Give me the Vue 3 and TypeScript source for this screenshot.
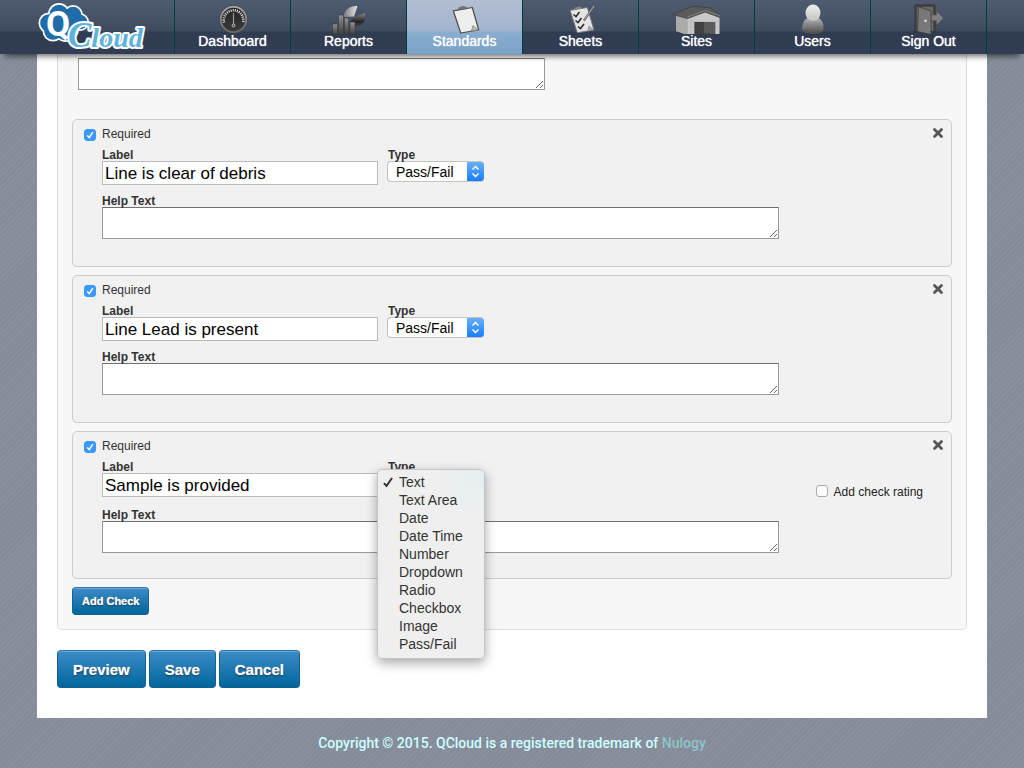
<script setup lang="ts">
import { ref } from 'vue'

interface Check {
  id: number
  required: boolean
  label: string
  type: string
  help: string
  rating?: boolean
  open?: boolean
}

const navItems = ['Dashboard', 'Reports', 'Standards', 'Sheets', 'Sites', 'Users', 'Sign Out']
const current = 'Standards'

const types = [
  'Text', 'Text Area', 'Date', 'Date Time', 'Number',
  'Dropdown', 'Radio', 'Checkbox', 'Image', 'Pass/Fail',
]

const sectionHelp = ref('')

const checks = ref<Check[]>([
  { id: 1, required: true, label: 'Line is clear of debris', type: 'Pass/Fail', help: '' },
  { id: 2, required: true, label: 'Line Lead is present', type: 'Pass/Fail', help: '' },
  { id: 3, required: true, label: 'Sample is provided', type: 'Text', help: '', rating: false, open: true },
])

function choose(check: Check, type: string) {
  check.type = type
  check.open = false
}

function removeCheck(id: number) {
  checks.value = checks.value.filter((c) => c.id !== id)
}

function addCheck() {
  const id = Math.max(0, ...checks.value.map((c) => c.id)) + 1
  checks.value.push({ id, required: false, label: '', type: 'Text', help: '', rating: false })
}
</script>

<template>
  <div class="page">
    <header class="topbar">
      <div class="topbar-inner">
        <a href="#" class="logo" aria-label="QCloud">
          <svg width="112" height="54" viewBox="0 0 112 54">
            <g fill="#fff">
              <circle cx="22" cy="14" r="11" /><circle cx="36" cy="15" r="10" />
              <circle cx="12" cy="23" r="10.500" /><circle cx="16" cy="31" r="10.500" />
              <circle cx="43" cy="22" r="9" /><circle cx="29" cy="29" r="13" />
            </g>
            <g fill="#1f6ca8">
              <circle cx="22" cy="14" r="9.3" /><circle cx="36" cy="15" r="8.3" />
              <circle cx="12" cy="23" r="8.8" /><circle cx="16" cy="31" r="8.8" />
              <circle cx="43" cy="22" r="7.3" /><circle cx="29" cy="29" r="11.3" />
            </g>
            <text x="9" y="36" class="logo-q">Q</text>
            <text x="31" y="47" class="logo-cloud"><tspan class="cap">C</tspan>loud</text>
          </svg>
        </a>
        <nav class="nav">
          <a
            v-for="item in navItems"
            :key="item"
            href="#"
            class="nav-item"
            :class="{ active: item === current }"
          >
            <svg v-if="item === 'Dashboard'" width="57" height="34" viewBox="0 0 57 34">
              <defs>
                <linearGradient id="ring" x1="0" y1="0" x2="0" y2="1">
                  <stop offset="0" stop-color="#a4a4a4" /><stop offset="1" stop-color="#666" />
                </linearGradient>
                <linearGradient id="dial" x1="0" y1="0" x2="0" y2="1">
                  <stop offset="0" stop-color="#222" /><stop offset="1" stop-color="#3c3c3c" />
                </linearGradient>
              </defs>
              <circle cx="29.5" cy="19.5" r="14.2" fill="#333" />
              <circle cx="29.5" cy="19.5" r="12.8" fill="url(#dial)" stroke="url(#ring)" stroke-width="2" />
              <path d="M20 22.500a9.800 9.800 0 1 1 19 0" fill="none" stroke="#ddd" stroke-width="2.600" stroke-dasharray="1.100 1" />
              <path d="M29.500 13v11" stroke="#999" stroke-width="1.200" />
              <circle cx="29.500" cy="25.500" r="1.400" fill="none" stroke="#ccc" stroke-width="1" />
            </svg>
            <svg v-else-if="item === 'Reports'" width="57" height="34" viewBox="0 0 57 34">
              <defs>
                <linearGradient id="bar" x1="0" y1="0" x2="0" y2="1">
                  <stop offset="0" stop-color="#929292" /><stop offset="1" stop-color="#3a3a3a" />
                </linearGradient>
                <linearGradient id="slice" x1="0" y1="0" x2="1" y2="0">
                  <stop offset="0" stop-color="#777" /><stop offset="1" stop-color="#e8e8e8" />
                </linearGradient>
                <linearGradient id="slice2" x1="0" y1="0" x2="0" y2="1">
                  <stop offset="0" stop-color="#888" /><stop offset="0.600" stop-color="#222" /><stop offset="1" stop-color="#555" />
                </linearGradient>
              </defs>
              <path d="M34 16.500 23.500 17C24 10 30 5.500 37.500 6z" fill="url(#slice)" />
              <path d="M33.500 17.500 45 13c1 8-3 14-10 14.500l-5-5z" fill="url(#slice2)" />
              <g fill="url(#bar)" stroke="#333" stroke-width="0.500">
                <rect x="12.500" y="24" width="5" height="11" />
                <rect x="18.400" y="15" width="5" height="20" />
                <rect x="24.300" y="18" width="4.500" height="17" />
                <rect x="30" y="22" width="5" height="13" />
              </g>
            </svg>
            <svg v-else-if="item === 'Standards'" width="57" height="34" viewBox="0 0 57 34">
              <path d="M17.300 10.800 36.300 7.500l6.400 22.500-18 3z" fill="#eee" stroke="#4a4a4a" stroke-width="1.200" stroke-linejoin="round" />
              <path d="m22 9.800 1-2.300 2.500-.4.500-.9 1.500.4 2.500.3 1 1.700z" fill="#777" stroke="#555" stroke-width=".5" />
              <path d="m35.500 31 1.500-5.500 5 4.500z" fill="#bbb" stroke="#777" stroke-width=".7" />
            </svg>
            <svg v-else-if="item === 'Sheets'" width="57" height="34" viewBox="0 0 57 34">
              <path d="M18 10.300 35.300 7.500l6.700 22.500-16.700 2.700z" fill="#e4e4e4" stroke="#777" stroke-width="1" stroke-linejoin="round" />
              <path d="m22 9.500 1-2 5-1 2 1.500z" fill="#888" />
              <path d="m36 31 1-5 4.500 4z" fill="#aaa" stroke="#777" stroke-width=".6" />
              <g fill="none" stroke="#2d2d2d" stroke-width="1.600">
                <path d="m21.500 14.500 2.500 2 3.500-4.500" /><path d="m23.500 20.500 2.500 2 3.500-4.500" /><path d="m26 26.500 2.500 2 3.500-4.500" />
              </g>
              <path d="M42.300 5.500 32 20.500" stroke="#555" stroke-width="2.200" />
              <path d="M42 6 32.500 19.500" stroke="#bbb" stroke-width="1" />
            </svg>
            <svg v-else-if="item === 'Sites'" width="57" height="34" viewBox="0 0 57 34">
              <path d="m8 15 11.500 2V35L8 31.300z" fill="#aaa" />
              <path d="M19.300 17 37 9l14.500 6.500V34H19.300z" fill="#c9c9c9" />
              <path d="M8 20.500l11.500 1.500 32-1M8 25l11.500 2h32M14 16v17M23 17v17" fill="none" stroke="#b0b0b0" stroke-width=".6" />
              <path d="M26.300 22h21v12h-21z" fill="#424242" />
              <path d="M36 22h11v12l-11-1z" fill="#5b5b5b" />
              <path d="M4.700 14.500 24.300 6.200l17.400 1.600 11.600 8-1.600 1.700-14.500-5.500-17.700 6.500z" fill="#5a5a5a" stroke="#3f3f3f" stroke-width=".8" />
              <path d="m19.500 17 18-6.500 15 5.500" fill="none" stroke="#8b8b8b" stroke-width=".8" />
            </svg>
            <svg v-else-if="item === 'Users'" width="57" height="34" viewBox="0 0 57 34">
              <defs>
                <linearGradient id="head" x1="0" y1="0" x2="0" y2="1">
                  <stop offset="0" stop-color="#eee" /><stop offset="1" stop-color="#c4c4c4" />
                </linearGradient>
                <linearGradient id="torso" x1="0" y1="0" x2="0" y2="1">
                  <stop offset="0" stop-color="#b4b4b4" /><stop offset="1" stop-color="#484848" />
                </linearGradient>
              </defs>
              <path d="M18 30c0-6 2-11 6-12h10c4 1 6 6 5.500 12-2 3-6 4-10.500 4s-9-1-11-4z" fill="url(#torso)" />
              <ellipse cx="29" cy="12.800" rx="7.500" ry="8.300" fill="url(#head)" />
            </svg>
            <svg v-else width="57" height="34" viewBox="0 0 57 34">
              <path d="M15 5h20v27H15z" fill="#484848" stroke="#333" />
              <path d="M17 7h16v24H17z" fill="#696969" />
              <path d="M31 15h5.500v-4l7 7-7 7v-4.500H31z" fill="#808080" stroke="#555" stroke-width=".6" />
              <path d="M18.300 6.700 31 11v23.500l-13.500-3z" fill="#787878" stroke="#3d3d3d" stroke-width=".8" />
              <circle cx="25.500" cy="20.700" r="1.300" fill="#ddd" />
            </svg>
            <span>{{ item }}</span>
          </a>
        </nav>
      </div>
    </header>

    <main class="content">
      <section class="panel">
        <div class="section-help">
          <label for="section-help" class="field-label">Help Text</label>
          <textarea id="section-help" v-model="sectionHelp"></textarea>
        </div>

        <article v-for="check in checks" :key="check.id" class="check">
          <div class="check-head">
            <input :id="`required-${check.id}`" v-model="check.required" type="checkbox" />
            <label :for="`required-${check.id}`">Required</label>
            <button type="button" class="close" aria-label="Remove check" @click="removeCheck(check.id)">
              <svg width="12" height="12" viewBox="0 0 12 12">
                <path d="m2.500 2.500 7 7m0-7-7 7" stroke="#555" stroke-width="2.800" stroke-linecap="round" />
              </svg>
            </button>
          </div>

          <div class="check-body">
            <div class="field-row">
              <div class="field name-field">
                <label :for="`label-${check.id}`" class="field-label">Label</label>
                <input :id="`label-${check.id}`" v-model="check.label" type="text" />
              </div>
              <div class="field type-field">
                <label :for="`type-${check.id}`" class="field-label">Type</label>
                <select :id="`type-${check.id}`" v-model="check.type">
                  <option v-for="type in types" :key="type">{{ type }}</option>
                </select>
                <ul v-if="check.open" class="menu" role="listbox" aria-label="Type">
                  <li
                    v-for="type in types"
                    :key="type"
                    role="option"
                    :aria-selected="type === check.type"
                    @click="choose(check, type)"
                  >
                    <svg v-if="type === check.type" class="tick" width="12" height="12" viewBox="0 0 12 12">
                      <path d="M2 7.200 4.500 10 10 2" fill="none" stroke="#333" stroke-width="2" />
                    </svg>
                    <span>{{ type }}</span>
                  </li>
                </ul>
              </div>
              <div v-if="check.rating !== undefined" class="rating">
                <input :id="`rating-${check.id}`" v-model="check.rating" type="checkbox" />
                <label :for="`rating-${check.id}`">Add check rating</label>
              </div>
            </div>
            <div class="field help-field">
              <label :for="`help-${check.id}`" class="field-label">Help Text</label>
              <textarea :id="`help-${check.id}`" v-model="check.help"></textarea>
            </div>
          </div>
        </article>

        <button type="button" class="btn small" @click="addCheck">Add Check</button>
      </section>

      <div class="actions">
        <button type="button" class="btn">Preview</button>
        <button type="button" class="btn">Save</button>
        <button type="button" class="btn">Cancel</button>
      </div>
    </main>

    <footer class="footer">
      Copyright © 2015. QCloud is a registered trademark of <a href="#">Nulogy</a>
    </footer>
  </div>
</template>

<style>
body {
  background: repeating-linear-gradient(135deg, #898f9d 0 2px, #858b99 2px 4px);
}
</style>

<style scoped>
.page {
  font: 12px/14px "Liberation Sans", Arial, sans-serif;
  color: #333;
}

.page * {
  box-sizing: border-box;
}

.topbar {
  position: sticky;
  top: 0;
  z-index: 5;
  height: 54px;
  background: linear-gradient(#4e5b71 0, #3f4b5f 31px, #303c50 32px, #313d53 100%);
  box-shadow: 0 7px 6px -5px rgba(0, 0, 0, 0.6);
}

.topbar-inner {
  display: flex;
  justify-content: space-between;
  max-width: 950px;
  height: 100%;
  margin: 0 auto;
}

.logo svg {
  display: block;
}

.logo-q {
  font: bold 35px Roboto, sans-serif;
  fill: #fff;
}

.logo-cloud {
  font: italic bold 28px "Liberation Serif", serif;
  fill: #5db3dc;
  stroke: #fff;
  stroke-width: 4px;
  stroke-linejoin: round;
  paint-order: stroke;
}

.logo-cloud .cap {
  font-size: 35px;
}

.nav {
  display: flex;
  border-right: 1px solid #063b3b;
}

.nav-item {
  display: flex;
  flex-direction: column;
  align-items: center;
  width: 116px;
  border-left: 1px solid #063b3b;
  color: #fff;
  font-size: 14px;
  line-height: 14px;
  text-decoration: none;
  text-shadow: 0 0 1px #fff;
}

.nav-item.active {
  background: linear-gradient(#b3bfd1 0, #a1b3cf 31px, #8badcf 32px, #78a2c8 100%);
}

.content {
  max-width: 950px;
  margin: -20px auto 0;
  padding: 0 20px 30px;
  background: #fff;
}

.panel {
  display: flex;
  flex-direction: column;
  align-items: stretch;
  gap: 8px;
  padding: 6px 14px 14px;
  border: 1px solid #ddd;
  border-top: 0;
  border-radius: 0 0 5px 5px;
  background: #f7f7f7;
}

.section-help {
  width: 467px;
  max-width: 100%;
  margin: 0 0 21px 6px;
}

.field-label {
  display: block;
  margin-bottom: -1px;
  padding-top: 2px;
  line-height: 14px;
  font-weight: bold;
}

.section-help .field-label {
  margin-bottom: 4px;
  padding: 0;
}

textarea {
  display: block;
  width: 100%;
  height: 32px;
  margin: 0;
  border: 1px solid #999;
  border-top-color: #707070;
  border-radius: 0;
  background: #fff;
}

.check {
  min-height: 148px;
  padding: 6px 7px 6px 11px;
  border: 1px solid #ccc;
  border-radius: 5px;
  background: #f1f1f1;
}

.check-head {
  display: flex;
  align-items: flex-start;
  gap: 6px;
  height: 16px;
  line-height: 16px;
}

.check-head input {
  margin-top: 3px;
}

input[type="checkbox"] {
  appearance: none;
  width: 12px;
  height: 12px;
  margin-bottom: 0;
  margin-inline: 0;
  border: 1px solid #aaa;
  border-radius: 3px;
  background: #fff;
}

input[type="checkbox"]:checked {
  border-color: #3b99fc;
  background: #3b99fc url("data:image/svg+xml,%3Csvg xmlns='http://www.w3.org/2000/svg' viewBox='0 0 10 10'%3E%3Cpath d='M2.200 5.400 4.300 7.600 7.800 2.200' fill='none' stroke='%23fff' stroke-width='1.500'/%3E%3C/svg%3E") center / 10px 10px no-repeat;
}

.close {
  display: flex;
  margin: 1px 0 0 auto;
  padding: 0;
  border: 0;
  background: none;
}

.check-body {
  margin: 4px 21px 0 18px;
}

.field-row {
  display: flex;
  align-items: flex-start;
  gap: 9px;
}

.name-field {
  width: 276px;
}

input[type="text"] {
  display: block;
  width: 100%;
  height: 24px;
  margin: 0;
  padding: 1px 2px 0;
  border: 1px solid #bbb;
  background: #fff;
  color: #000;
  font: 17px "Liberation Sans", Arial, sans-serif;
}

.type-field {
  position: relative;
  width: 97px;
}

.type-field .field-label {
  padding-left: 1px;
}

select {
  display: block;
  appearance: none;
  width: 100%;
  height: 21px;
  margin: 0;
  padding: 0 20px 0 8px;
  border: 1px solid #c3c3c3;
  border-right: 0;
  border-radius: 4px;
  background:
    url("data:image/svg+xml,%3Csvg xmlns='http://www.w3.org/2000/svg' viewBox='0 0 17 21'%3E%3Cpath d='m5.500 8.500 3-3 3 3M5.500 12.500l3 3 3-3' fill='none' stroke='%23fff' stroke-width='1.500'/%3E%3C/svg%3E") right center / 17px 21px no-repeat border-box,
    linear-gradient(#6bb2fb, #147bff) right center / 17px 21px no-repeat border-box,
    #fff;
  color: #000;
  font: 14px "Liberation Sans", Arial, sans-serif;
}

.menu {
  position: absolute;
  top: 11px;
  left: -10px;
  z-index: 2;
  width: 108px;
  margin: 0;
  padding: 3px 0 5px;
  border: 1px solid #c4c4c4;
  border-radius: 5px;
  background: radial-gradient(circle at top right, #e2f0f0 0, #efefef 50px);
  box-shadow: 0 4px 12px rgba(0, 0, 0, 0.35);
  list-style: none;
  font-size: 14px;
  line-height: 18px;
}

.menu li {
  position: relative;
  padding-left: 21px;
}

.tick {
  position: absolute;
  top: 3px;
  left: 4px;
}

.rating {
  display: flex;
  gap: 6px;
  margin: 27px 0 0 auto;
  color: #222;
}

.rating input {
  margin-top: 0;
}

.help-field {
  width: 677px;
  max-width: 100%;
  margin-top: 7px;
}

.btn {
  height: 38px;
  padding: 0 15px;
  border: 1px solid #14608f;
  border-top-color: #2c76ab;
  border-radius: 4px;
  background: linear-gradient(#3c8bc8, #00679b);
  box-shadow: inset 0 1px 0 rgba(255, 255, 255, 0.25);
  color: #fff;
  font: bold 15px "Liberation Sans", Arial, sans-serif;
  text-shadow: 0 1px 2px rgba(0, 0, 0, 0.6), 0 0 1px #fff;
}

.btn.small {
  align-self: flex-start;
  height: 28px;
  padding: 0 9px;
  font-size: 11px;
}

.actions {
  display: flex;
  gap: 3px;
  margin-top: 20px;
}

.footer {
  padding: 15px 20px;
  color: #cff;
  font: 500 14px/20px Roboto, sans-serif;
  text-align: center;
}

.footer a {
  color: #8fc4c8;
  text-decoration: none;
}
</style>
